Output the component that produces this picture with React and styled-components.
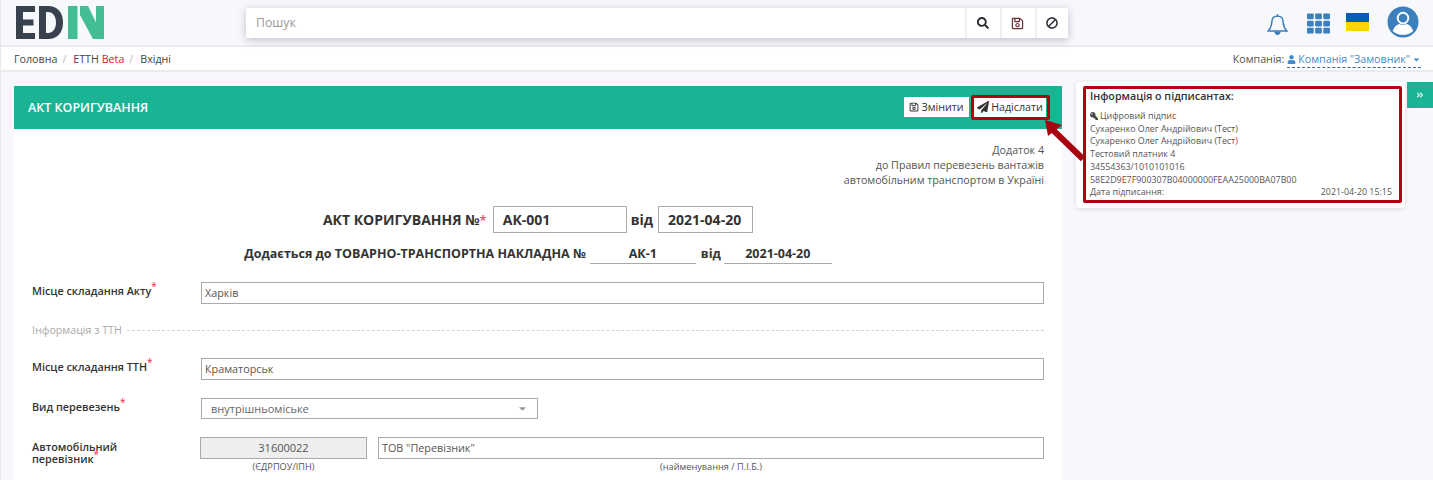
import React from 'react'
import styled, {createGlobalStyle} from 'styled-components'
import {FaSearch, FaRegSave, FaBan, FaUser, FaCaretDown, FaPaperPlane, FaKey, FaAngleDoubleRight, FaTh} from 'react-icons/fa'

const Global = createGlobalStyle`
    html, body {
        margin: 0;
        height: 480px;
        overflow: hidden;
        background: #f7f8fb;
    }
    body {
        font-family: "Open Sans", "Noto Sans", sans-serif;
        font-size: 11px;
        color: #444;
    }
    * { box-sizing: border-box; }
`

const Page = styled.div`
    position: relative;
    height: 480px;
    overflow: hidden;
    border-left: 1px solid #e7e7ec;
`

const Header = styled.header`
    height: 47px;
    display: flex;
    align-items: flex-start;
    border-bottom: 2px solid #eaeaef;
`

const LogoBox = styled.div`
    width: 245px;
    padding: 6px 0 0 15px;
    svg { display: block; }
`

const SearchBar = styled.div`
    margin-top: 8px;
    width: 822px;
    height: 30px;
    display: flex;
    background: #fff;
    box-shadow: 0 2px 8px rgba(60, 70, 100, 0.3);
`

const SearchInput = styled.div`
    flex: 1;
    padding-left: 10px;
    line-height: 29px;
    font-size: 12.3px;
    color: #999;
`

const SearchBtn = styled.div`
    width: ${p => p.$w}px;
    padding-right: 2px;
    display: flex;
    align-items: center;
    justify-content: center;
    border-left: 2px solid #eef0f2;
    color: #2b2f36;
    font-size: ${p => p.$size || 12}px;
`

const FlippedBan = styled(FaBan)`
    transform: scaleX(-1);
`

const HeaderIcons = styled.div`
    margin-left: auto;
    height: 45px;
    display: flex;
    align-items: flex-start;
    color: #3b7fbd;
`

const IconSlot = styled.div`
    width: ${p => p.$w}px;
    padding-top: ${p => p.$top}px;
    svg { display: block; }
`

const Crumbs = styled.div`
    height: 25px;
    background: #fff;
    border-bottom: 2px solid #eaeaef;
    display: flex;
    align-items: flex-start;
    padding: 5px 12px 0 13px;
    font-size: 10.7px;
    line-height: 15px;
    color: #555;
`

const Crumb = styled.span`
    color: #444;
`

const CrumbSep = styled.span`
    color: #bbb;
    padding: 0 7px 0 5px;
`

const Beta = styled.span`
    color: #e8142a;
`

const CompanyBox = styled.div`
    margin-left: auto;
    display: flex;
`

const CompanyLink = styled.span`
    display: flex;
    align-items: flex-start;
    gap: 2px;
    height: 16px;
    margin-left: 3px;
    color: #428bca;
    border-bottom: 1px dashed #2f6a9c;
    svg { font-size: 9px; margin-top: 3px; }
`

const Layout = styled.div`
    display: flex;
    align-items: flex-start;
    padding: 10px 0 0 13px;
`

const Panel = styled.section`
    width: 1048px;
    margin-top: 4px;
    flex-shrink: 0;
`

const PanelHead = styled.div`
    height: 43px;
    background: #1ab394;
    display: flex;
    align-items: center;
    padding: 0 14px 1px;
    color: #fff;
`

const PanelTitle = styled.h2`
    margin: 0;
    font-size: 12.5px;
    font-weight: 600;
`

const HeadActions = styled.div`
    margin-left: auto;
    display: flex;
    gap: 5px;
    margin-right: 2px;
`

const HeadBtn = styled.div`
    width: ${p => p.$w}px;
    height: 20px;
    display: flex;
    align-items: center;
    justify-content: center;
    gap: 2px;
    background: #fff;
    color: #333;
    font-size: 10.7px;
`

const PanelBody = styled.div`
    background: #fff;
    padding: 14px 18px 0 18px;
    height: 360px;
`

const Appendix = styled.div`
    text-align: right;
    font-size: 10.7px;
    line-height: 15px;
    color: #555;
`

const TitleRow = styled.div`
    display: flex;
    justify-content: center;
    align-items: center;
    margin-top: 18px;
    font-size: 14px;
    font-weight: 700;
    color: #333;
`

const Req = styled.sup`
    color: #ed1c4c;
    font-size: ${p => p.$size || 10}px;
    line-height: 0;
    font-weight: 400;
    vertical-align: ${p => p.$up || 5}px;
`

const BoxValue = styled.div`
    width: ${p => p.$w}px;
    height: 27px;
    margin: 0 ${p => p.$mr || 0}px 0 ${p => p.$ml || 0}px;
    padding-left: ${p => p.$pad}px;
    border: 1px solid #aaa;
    line-height: 25px;
    font-size: 14px;
    font-weight: 700;
`

const AttachRow = styled.div`
    display: flex;
    justify-content: center;
    align-items: flex-start;
    margin-top: 7px;
    font-size: 12.5px;
    font-weight: 700;
    line-height: 28px;
    color: #333;
    height: 24px;
`

const LineValue = styled.div`
    width: ${p => p.$w}px;
    height: 24px;
    margin: 0 ${p => p.$mr || 0}px 0 ${p => p.$ml || 0}px;
    border-bottom: 1px solid #aaa;
    text-align: center;
`

const FormRow = styled.div`
    display: flex;
    align-items: flex-start;
    margin-top: ${p => p.$mt}px;
`

const Label = styled.div`
    width: 169px;
    flex-shrink: 0;
    font-size: 10.8px;
    font-weight: 600;
    line-height: ${p => p.$lh || 13}px;
    color: #333;
    padding-top: ${p => p.$top || 0}px;
`

const TextBox = styled.div`
    flex: 1;
    height: 22px;
    border: 1px solid #aaa;
    padding-left: 3px;
    line-height: 20px;
    font-size: 10.8px;
    color: #555;
`

const SelectBox = styled.div`
    width: 337px;
    height: 21px;
    border: 1px solid #aaa;
    padding: 0 9px 0 9px;
    display: flex;
    justify-content: space-between;
    align-items: center;
    font-size: 11px;
    color: #666;
    svg { color: #999; font-size: 11px; }
`

const Divider = styled.div`
    display: flex;
    align-items: center;
    gap: 5px;
    margin-top: 19px;
    font-size: 10.7px;
    line-height: 15px;
    color: #aaa;
    &::after {
        content: '';
        flex: 1;
        border-top: 1px dashed #d4d4d4;
    }
`

const CarrierField = styled.div`
    width: ${p => p.$w}px;
    flex: ${p => p.$grow ? 1 : 'none'};
    margin-left: ${p => p.$ml}px;
`

const Hint = styled.div`
    text-align: center;
    font-size: 9.2px;
    line-height: 12px;
    margin-top: 2px;
    color: #555;
`

const CodeBox = styled.div`
    height: 22px;
    background: #eee;
    border: 1px solid #aaa;
    text-align: center;
    line-height: 19px;
    font-size: 11px;
    color: #555;
`

const SideCard = styled.aside`
    width: 329px;
    height: 126px;
    margin-left: 14px;
    background: #fff;
    border-radius: 4px;
    box-shadow: 0 1px 4px rgba(60, 70, 100, 0.16);
    padding: 8px 13px 0 14px;
    font-size: 8.9px;
    line-height: 12.7px;
    color: #555;
`

const SideTitle = styled.div`
    font-size: 10.7px;
    font-weight: 600;
    line-height: 13px;
    color: #333;
    margin-bottom: 7px;
`

const SignLine = styled.div`
    display: flex;
    justify-content: space-between;
    align-items: center;
`

const SignType = styled.div`
    display: flex;
    align-items: center;
    gap: 2px;
    svg { font-size: 8px; color: #444; transform: scaleX(-1); }
`

const Toggle = styled.div`
    width: 26px;
    height: 26px;
    margin-left: 2px;
    background: #1ab394;
    color: #d8f3ec;
    display: flex;
    align-items: center;
    justify-content: center;
    font-size: 8px;
`

// annotation layer painted over the screenshot
const Mark = styled.div`
    position: absolute;
    left: ${p => p.$x}px;
    top: ${p => p.$y}px;
    width: ${p => p.$w}px;
    height: ${p => p.$h}px;
    border: 3px solid #b00012;
    border-radius: 2px;
    pointer-events: none;
`

const ArrowSvg = styled.svg`
    position: absolute;
    left: 1035px;
    top: 110px;
`

const Logo = () => (
    <svg width="88" height="33" viewBox="0 0 88 33">
        <path fill="#38424f" d="M0 0h19v6H7v7.500h10.500v6H7V27h12v6H0z" />
        <path fill="#38424f" fillRule="evenodd" d="M23 0h9c10 0 15 7 15 16.500S42 33 32 33h-9zM30 6v21h2c5 0 8-4.500 8-10.500S37 6 32 6z" />
        <path fill="#43bd94" d="M52 0h9.500v33H52zM64 0h8l16 33H77L64 9zM80 0h8v33h-.5L80 17z" />
    </svg>
)

const Bell = () => (
    <svg width="21" height="23" viewBox="0 0 21 23" fill="none" stroke="#3b7fbd" strokeWidth="1.500">
        <path d="M10.500 3c-3.800 0-5.600 3-5.700 6.200-.1 3.300-1.100 6-3.600 8.800h18.600c-2.500-2.800-3.500-5.500-3.600-8.800C16.100 6 14.300 3 10.500 3z" />
        <path d="M10.500 3V1" />
        <path d="M8 18.500c.3 1.800 1.300 2.800 2.500 2.800s2.200-1 2.500-2.800" fill="#3b7fbd" />
    </svg>
)

const Flag = () => (
    <svg width="23" height="18" viewBox="0 0 23 18">
        <rect width="23" height="9" fill="#0a5bb8" />
        <rect y="9" width="23" height="9" fill="#ffd500" />
    </svg>
)

const Avatar = () => (
    <svg width="32" height="32" viewBox="0 0 33 33">
        <circle cx="16.500" cy="16.500" r="16" fill="#3b7fbd" />
        <circle cx="16.500" cy="12.500" r="5.500" fill="none" stroke="#fff" strokeWidth="2" />
        <path d="M6 26c1-4 4-7 7-7.500 2 1.300 5 1.300 7 0 3 .5 6 3.500 7 7.500-5.500 5-15.500 5-21 0z" fill="#fff" />
    </svg>
)

function App() {
    return (
        <Page>
            <Global />
            <Header>
                <LogoBox><Logo /></LogoBox>
                <SearchBar>
                    <SearchInput>Пошук</SearchInput>
                    <SearchBtn $w={35}><FaSearch /></SearchBtn>
                    <SearchBtn $w={35} $size={13}><FaRegSave color="#6a3236" /></SearchBtn>
                    <SearchBtn $w={33}><FlippedBan /></SearchBtn>
                </SearchBar>
                <HeaderIcons>
                    <IconSlot $w={40} $top={13}><Bell /></IconSlot>
                    <IconSlot $w={39} $top={12}><FaTh size={23} /></IconSlot>
                    <IconSlot $w={41} $top={13}><Flag /></IconSlot>
                    <IconSlot $w={46} $top={6}><Avatar /></IconSlot>
                </HeaderIcons>
            </Header>
            <Crumbs>
                <Crumb>Головна</Crumb><CrumbSep>/</CrumbSep>
                <Crumb>ЕТТН <Beta>Beta</Beta></Crumb><CrumbSep>/</CrumbSep>
                <Crumb>Вхідні</Crumb>
                <CompanyBox>
                    Компанія:
                    <CompanyLink><FaUser />Компанія "Замовник"<FaCaretDown /></CompanyLink>
                </CompanyBox>
            </Crumbs>
            <Layout>
                <Panel>
                    <PanelHead>
                        <PanelTitle>АКТ КОРИГУВАННЯ</PanelTitle>
                        <HeadActions>
                            <HeadBtn $w={65}><FaRegSave size={10} />Змінити</HeadBtn>
                            <HeadBtn $w={72}><FaPaperPlane size={12} />Надіслати</HeadBtn>
                        </HeadActions>
                    </PanelHead>
                    <PanelBody>
                        <Appendix>
                            Додаток 4<br />
                            до Правил перевезень вантажів<br />
                            автомобільним транспортом в Україні
                        </Appendix>
                        <TitleRow>
                            АКТ КОРИГУВАННЯ №<Req $size={13} $up={6}>*</Req>
                            <BoxValue $w={134} $ml={6} $mr={4} $pad={9}>АК-001</BoxValue>
                            від
                            <BoxValue $w={95} $ml={5} $pad={9}>2021-04-20</BoxValue>
                        </TitleRow>
                        <AttachRow>
                            Додається до ТОВАРНО-ТРАНСПОРТНА НАКЛАДНА №
                            <LineValue $w={106} $ml={4} $mr={5}>АК-1</LineValue>
                            від
                            <LineValue $w={108} $ml={3}>2021-04-20</LineValue>
                        </AttachRow>
                        <FormRow $mt={18}>
                            <Label $top={2}>Місце складання Акту<Req>*</Req></Label>
                            <TextBox>Харків</TextBox>
                        </FormRow>
                        <Divider>Інформація з ТТН</Divider>
                        <FormRow $mt={20}>
                            <Label $top={2}>Місце складання ТТН<Req>*</Req></Label>
                            <TextBox>Краматорськ</TextBox>
                        </FormRow>
                        <FormRow $mt={18}>
                            <Label $top={2}>Вид перевезень<Req>*</Req></Label>
                            <SelectBox>внутрішньоміське<FaCaretDown /></SelectBox>
                        </FormRow>
                        <FormRow $mt={18}>
                            <Label $top={4} $lh={11.5}>Автомобільний<br />перевізник<Req>*</Req></Label>
                            <CarrierField $w={167} $ml={-1}>
                                <CodeBox>31600022</CodeBox>
                                <Hint>(ЄДРПОУ/ІПН)</Hint>
                            </CarrierField>
                            <CarrierField $grow $ml={11}>
                                <TextBox>ТОВ "Перевізник"</TextBox>
                                <Hint>(найменування / П.І.Б.)</Hint>
                            </CarrierField>
                        </FormRow>
                    </PanelBody>
                </Panel>
                <SideCard>
                    <SideTitle>Інформація о підписантах:</SideTitle>
                    <SignType><FaKey />Цифровий підпис</SignType>
                    <div>Сухаренко Олег Андрійович (Тест)</div>
                    <div>Сухаренко Олег Андрійович (Тест)</div>
                    <div>Тестовий платник 4</div>
                    <div>34554363/1010101016</div>
                    <div>58E2D9E7F900307B04000000FEAA25000BA07B00</div>
                    <SignLine><span>Дата підписання:</span><span>2021-04-20 15:15</span></SignLine>
                </SideCard>
                <Toggle><FaAngleDoubleRight /></Toggle>
            </Layout>
            <Mark $x={970} $y={95} $w={79} $h={25} />
            <Mark $x={1082} $y={86} $w={319} $h={117} />
            <ArrowSvg width="60" height="60" viewBox="0 0 60 60">
                <path d="M47 49L16 19" stroke="#a80010" strokeWidth="6" />
                <path d="M9 10L26 15L12 26z" fill="#a80010" />
            </ArrowSvg>
        </Page>
    )
}

export default App
